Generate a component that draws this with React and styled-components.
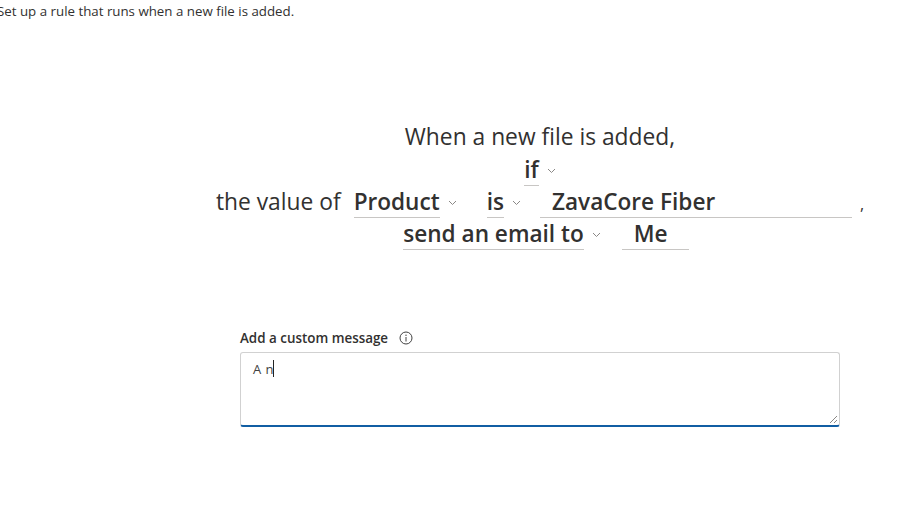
import React from "react";
import styled, { createGlobalStyle } from "styled-components";

const Global = createGlobalStyle`
  html, body { margin: 0; padding: 0; background: #ffffff; overflow: hidden; }
  body { font-family: "Open Sans", "Noto Sans", Arial, sans-serif; color: #323130; }
`;

const Page = styled.div`
  width: 1080px;
  height: 520px;
  display: flex;
  flex-direction: column;
`;

const Intro = styled.div`
  font-size: 13.3px;
  line-height: 22px;
  margin-left: -3px;
  color: #323130;
`;

const Sentence = styled.div`
  margin-top: 99px;
  display: flex;
  flex-direction: column;
  align-items: center;
  font-size: 22.6px;
  line-height: 32px;
  color: #323130;
`;

const Line = styled.div`
  display: flex;
  align-items: flex-end;
  height: 32.3px;
  margin-left: ${(p) => p.$shift || 0}px;
`;

const Plain = styled.span`
  white-space: nowrap;
  font-size: 22.8px;
  line-height: 30px;
  padding-bottom: 1px;
  margin-right: ${(p) => p.$mr || 0}px;
`;

const DropWrap = styled.span`
  display: inline-flex;
  align-items: flex-start;
  margin-right: ${(p) => p.$mr || 0}px;
`;

const DropText = styled.span`
  font-weight: 600;
  white-space: nowrap;
  border-bottom: 1px solid #c8c6c4;
  line-height: 30px;
`;

const Chevron = styled.svg`
  width: 9px;
  height: 6px;
  margin-left: 8px;
  margin-top: 13px;
  flex: none;
`;

const Field = styled.span`
  display: inline-block;
  width: ${(p) => p.$w}px;
  box-sizing: border-box;
  padding-left: 12px;
  font-weight: 600;
  white-space: nowrap;
  border-bottom: 1px solid #c8c6c4;
  line-height: 30px;
  margin-right: ${(p) => p.$mr || 0}px;
`;

const Comma = styled.span`
  font-size: 16px;
  line-height: 28px;
`;

const Message = styled.div`
  margin-top: 78px;
  align-self: center;
  width: 600px;
  display: flex;
  flex-direction: column;
  gap: 4px;
`;

const LabelRow = styled.div`
  display: flex;
  align-items: center;
  gap: 11px;
  font-size: 13.4px;
  font-weight: 600;
  line-height: 20px;
  color: #323130;
`;

const Box = styled.div`
  position: relative;
  height: 75px;
  box-sizing: border-box;
  border: 1px solid #d1d1d1;
  border-bottom: 2px solid #115ea3;
  border-radius: 3px;
  padding: 7px 12px;
  font-size: 13px;
  line-height: 18px;
  color: #424242;
  letter-spacing: 0.5px;
`;

const Caret = styled.span`
  display: inline-block;
  width: 1px;
  height: 17px;
  background: #242424;
  vertical-align: -3px;
  margin-left: -1px;
`;

const Grip = styled.svg`
  position: absolute;
  right: 1px;
  bottom: 1px;
  width: 9px;
  height: 9px;
`;

function Drop({ children, mr }) {
  return (
    <DropWrap $mr={mr}>
      <DropText>{children}</DropText>
      <Chevron viewBox="0 0 9 6">
        <path d="M1 1 L4.5 4.5 L8 1" fill="none" stroke="#8a8886" strokeWidth="1" />
      </Chevron>
    </DropWrap>
  );
}

function InfoIcon() {
  return (
    <svg width="14" height="14" viewBox="0 0 14 14">
      <circle cx="7" cy="7" r="6" fill="none" stroke="#424242" strokeWidth="1" />
      <path d="M7 6 V10.5" stroke="#424242" strokeWidth="1" />
      <circle cx="7" cy="4.2" r="0.7" fill="#424242" />
    </svg>
  );
}

export default function App() {
  return (
    <Page>
      <Global />
      <Intro>Set up a rule that runs when a new file is added.</Intro>
      <Sentence>
        <Line>
          <Plain>When a new file is added,</Plain>
        </Line>
        <Line>
          <Drop>if</Drop>
        </Line>
        <Line>
          <Plain $mr={13}>the value of</Plain>
          <Drop mr={30}>Product</Drop>
          <Drop mr={19}>is</Drop>
          <Field $w={312} $mr={8}>ZavaCore Fiber</Field>
          <Comma>,</Comma>
        </Line>
        <Line $shift={12}>
          <Drop mr={21}>send an email to</Drop>
          <Field $w={67}>Me</Field>
        </Line>
      </Sentence>
      <Message>
        <LabelRow>
          Add a custom message
          <InfoIcon />
        </LabelRow>
        <Box>
          A n<Caret />
          <Grip viewBox="0 0 9 9">
            <path d="M8 1 L1 8 M8 5 L5 8" stroke="#8a8886" strokeWidth="1" />
          </Grip>
        </Box>
      </Message>
    </Page>
  );
}
